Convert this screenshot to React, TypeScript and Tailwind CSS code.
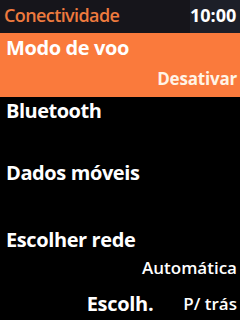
import React from "react";

export default function App() {
  const font = { fontFamily: '"Open Sans", "DejaVu Sans", sans-serif' };
  return (
    <div className="w-[240px] h-[320px] bg-black flex flex-col overflow-hidden" style={font}>
      <div className="h-[33px] bg-[#16151b] flex items-stretch justify-between">
        <div className="pl-[4px] text-[18px] leading-[30px] text-[#ee7a3e] font-semibold tracking-[-0.6px]">Conectividade</div>
        <div className="w-[50px] bg-[#1d1f28] text-white text-[18px] leading-[30px] font-bold text-right pr-[4px]">10:00</div>
      </div>
      <div className="h-[64px] bg-[#fa7a3c] flex flex-col px-[6px]">
        <div className="text-white font-bold text-[20px] leading-[24px] mt-[3px] tracking-[-0.4px]">Modo de voo</div>
        <div className="text-[#fff4e6] font-bold text-[17px] leading-[22px] text-right mt-[8px] -mr-[3px] tracking-[-0.2px]">Desativar</div>
      </div>
      <div className="h-[64px] px-[6px]">
        <div className="text-white font-bold text-[20px] leading-[24px] mt-[2px] tracking-[-0.5px]">Bluetooth</div>
      </div>
      <div className="h-[66px] px-[6px]">
        <div className="text-white font-bold text-[20px] leading-[24px] tracking-[-0.4px]">Dados móveis</div>
      </div>
      <div className="h-[60px] px-[6px] flex flex-col">
        <div className="text-white font-bold text-[20px] leading-[24px] mt-[1px] tracking-[-0.4px]">Escolher rede</div>
        <div className="text-white font-semibold text-[17px] leading-[22px] text-right mt-[5px] -mr-[3px]">Automática</div>
      </div>
      <div className="flex-1 flex items-center justify-end pr-[3px] gap-[30px]">
        <div className="text-white font-bold text-[20px] leading-[24px] tracking-[-0.3px]">Escolh.</div>
        <div className="text-white font-semibold text-[17px] leading-[24px]">P/ trás</div>
      </div>
    </div>
  );
}
